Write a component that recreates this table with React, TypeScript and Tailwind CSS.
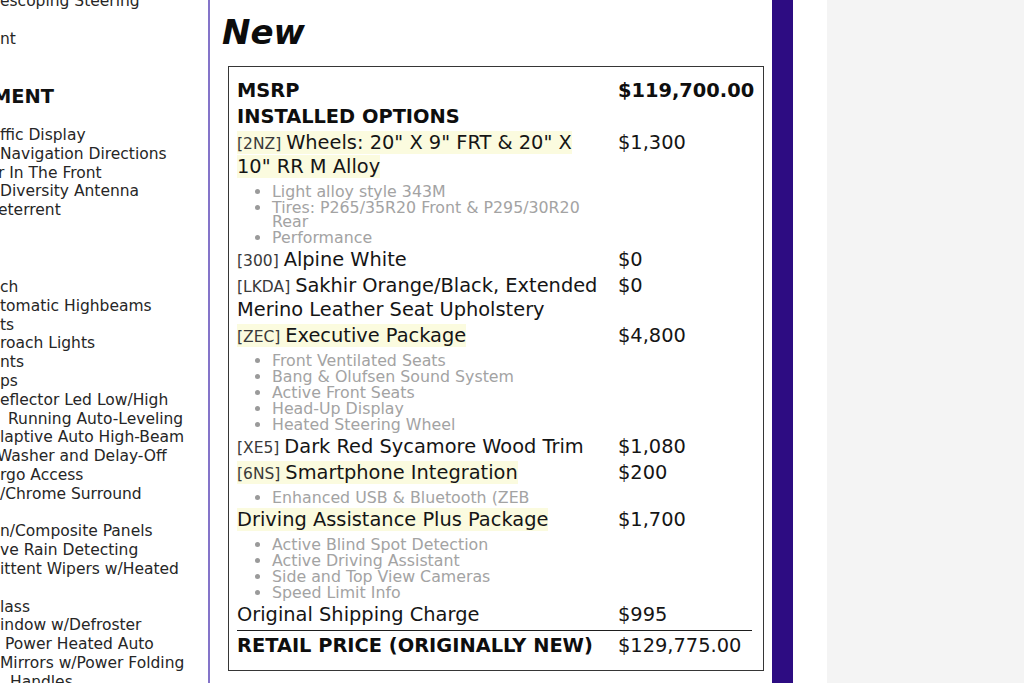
import React from 'react';

type Line = { text: string; pad?: string };
type Option = { code?: string; name: string; price: string; highlight?: boolean; details?: string[] };

// left column is cut off by the viewport, only the visible tails are kept
const headLines: Line[] = [
    { text: 'escoping Steering' },
    { text: '' },
    { text: 'nt' },
];

const techLines: Line[] = [
    { text: 'ffic Display' },
    { text: 'Navigation Directions' },
    { text: 'r In The Front', pad: '-ml-[2px]' },
    { text: 'Diversity Antenna' },
    { text: 'eterrent', pad: '-ml-[2px]' },
];

const exteriorLines: Line[] = [
    { text: 'ch' },
    { text: 'tomatic Highbeams' },
    { text: 'ts' },
    { text: 'roach Lights' },
    { text: 'nts' },
    { text: 'ps' },
    { text: 'eflector Led Low/High' },
    { text: 'Running Auto-Leveling', pad: 'pl-[8px]' },
    { text: 'laptive Auto High-Beam' },
    { text: 'Washer and Delay-Off', pad: '-ml-[3px]' },
    { text: 'rgo Access' },
    { text: '/Chrome Surround' },
    { text: '' },
    { text: 'n/Composite Panels' },
    { text: 've Rain Detecting' },
    { text: 'ittent Wipers w/Heated' },
    { text: '' },
    { text: 'lass' },
    { text: 'indow w/Defroster' },
    { text: 'Power Heated Auto', pad: 'pl-[5px]' },
    { text: 'Mirrors w/Power Folding' },
    { text: 'Handles', pad: 'pl-[10px]' },
];

const options: Option[] = [
    {
        code: '2NZ',
        name: 'Wheels: 20" X 9" FRT & 20" X 10" RR M Alloy',
        price: '$1,300',
        highlight: true,
        details: ['Light alloy style 343M', 'Tires: P265/35R20 Front & P295/30R20 Rear', 'Performance'],
    },
    { code: '300', name: 'Alpine White', price: '$0' },
    { code: 'LKDA', name: 'Sakhir Orange/Black, Extended Merino Leather Seat Upholstery', price: '$0' },
    {
        code: 'ZEC',
        name: 'Executive Package',
        price: '$4,800',
        highlight: true,
        details: ['Front Ventilated Seats', 'Bang & Olufsen Sound System', 'Active Front Seats', 'Head-Up Display', 'Heated Steering Wheel'],
    },
    { code: 'XE5', name: 'Dark Red Sycamore Wood Trim', price: '$1,080' },
    {
        code: '6NS',
        name: 'Smartphone Integration',
        price: '$200',
        highlight: true,
        details: ['Enhanced USB & Bluetooth (ZEB'],
    },
    {
        name: 'Driving Assistance Plus Package',
        price: '$1,700',
        highlight: true,
        details: ['Active Blind Spot Detection', 'Active Driving Assistant', 'Side and Top View Cameras', 'Speed Limit Info'],
    },
    { name: 'Original Shipping Charge', price: '$995' },
];

const LineList: React.FC<{ lines: Line[] }> = ({ lines }) => (
    <div>
        {lines.map((l, i) => (
            <div key={i} className={`h-[18.8px] whitespace-nowrap ${l.pad ?? ''}`}>
                {l.text || '\u00a0'}
            </div>
        ))}
    </div>
);

const OptionRow: React.FC<{ option: Option }> = ({ option }) => (
    <div className="grid grid-cols-[373px_1fr] gap-x-[8px] py-px">
        <div>
            <span className={option.highlight ? 'bg-[#fbfbdf]' : ''}>
                {option.code && <span className="text-[15.5px] leading-none text-[#3a3a3a]">[{option.code}] </span>}
                {option.name}
            </span>
            {option.details && (
                <ul className="mt-[5px] list-disc pl-[35px] text-[15.8px] leading-[14px] text-[#a3a3a3] marker:text-[#9a9a9a]">
                    {option.details.map(d => (
                        <li key={d} className="py-px">{d}</li>
                    ))}
                </ul>
            )}
        </div>
        <div>{option.price}</div>
    </div>
);

const App: React.FC = () => {
    return (
        <div className="flex h-[683px] w-[1024px] overflow-hidden bg-white font-['DejaVu_Sans',sans-serif] text-[#151515]">
            {/* equipment column, scrolled out to the left */}
            <div className="w-[208px] shrink-0 overflow-hidden text-[15.5px] leading-[18.8px] text-[#262626]">
                <div className="-mt-[8px]">
                    <LineList lines={headLines} />
                </div>
                <div className="-ml-[8px] mt-[37px] text-[19.4px] font-bold leading-[24px] text-[#111]">MENT</div>
                <div className="mt-[16.6px]">
                    <LineList lines={techLines} />
                </div>
                <div className="mt-[58px]">
                    <LineList lines={exteriorLines} />
                </div>
            </div>

            {/* pricing column */}
            <div className="w-[564px] shrink-0 border-l-2 border-[#8474c9] pl-[18px] pr-[8px]">
                <h2 className="-ml-[6px] pt-[12px] text-[34px] font-bold italic leading-[40px] text-[#0c0c0c]">New</h2>
                <div className="mt-[14px] border border-[#363636] px-[8px] pt-[11px] pb-[11px] text-[19.4px] leading-[24px]">
                    <div className="grid grid-cols-[373px_1fr] gap-x-[8px] py-px font-bold text-[#0e0e0e]">
                        <div>MSRP</div>
                        <div>$119,700.00</div>
                    </div>
                    <div className="py-px font-bold text-[#0e0e0e]">INSTALLED OPTIONS</div>
                    {options.map(o => (
                        <OptionRow key={o.name} option={o} />
                    ))}
                    <div className="mr-[3px] mt-[2px] border-t border-[#1e1e1e]" />
                    <div className="grid grid-cols-[373px_1fr] gap-x-[8px] pt-[3px] pb-px">
                        <div className="font-bold text-[#0e0e0e]">RETAIL PRICE (ORIGINALLY NEW)</div>
                        <div>$129,775.00</div>
                    </div>
                </div>
            </div>

            <div className="w-[21px] shrink-0 bg-[#2d0c82]" />
            <div className="w-[34px] shrink-0 bg-white" />
            <div className="flex-1 bg-[#f4f4f4]" />
        </div>
    );
};

export default App;
